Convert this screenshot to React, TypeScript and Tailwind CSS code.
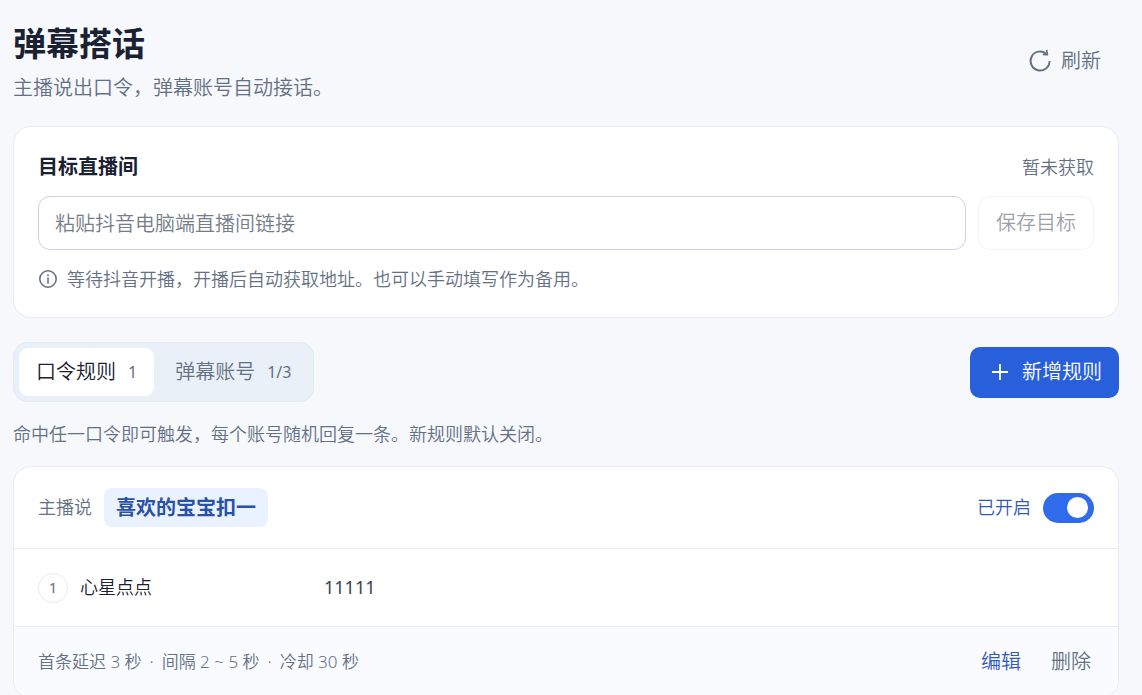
import { useState } from "react";

function RefreshIcon() {
  return (
    <svg className="size-6" viewBox="0 0 24 24" fill="none" stroke="currentColor" strokeWidth="1.9" strokeLinejoin="round" aria-hidden="true">
      <path d="M21.6 12A9.5 9.5 0 1 1 18.2 4.7" />
      <path d="M18.6 0.9L19.4 5.6L14.8 5.4" strokeWidth="1.7" />
    </svg>
  );
}

function InfoIcon() {
  return (
    <svg className="size-5 shrink-0" viewBox="0 0 20 20" fill="none" stroke="currentColor" strokeWidth="1.6" strokeLinecap="round" aria-hidden="true">
      <circle cx="10" cy="10" r="8.2" />
      <path d="M10 9.2v4.8" />
      <path d="M10 6.2v.2" strokeWidth="1.8" />
    </svg>
  );
}

function PlusIcon() {
  return (
    <svg className="size-5" viewBox="0 0 20 20" fill="none" stroke="currentColor" strokeWidth="1.8" aria-hidden="true">
      <path d="M10 2v16M2 10h16" />
    </svg>
  );
}

function Header() {
  return (
    <header className="flex items-center justify-between">
      <div>
        <h1 className="text-[33px] leading-12 font-bold text-[#1a2133]">弹幕搭话</h1>
        <p className="mt-1 text-[20px] leading-8 text-[#647084]">主播说出口令，弹幕账号自动接话。</p>
      </div>
      <button type="button" className="mr-[18px] flex items-center gap-[9px] pb-[2px] text-[20px] leading-8 text-[#647084]">
        <RefreshIcon />
        刷新
      </button>
    </header>
  );
}

function TargetCard() {
  const [url, setUrl] = useState("");
  return (
    <section className="mt-[22px] rounded-[18px] border border-[#e6eaf2] bg-white px-6 pt-6 pb-6">
      <div className="flex items-center justify-between leading-8">
        <label htmlFor="room-url" className="text-[20px] font-bold text-[#1a2133]">目标直播间</label>
        <span className="text-[18px] text-[#647084]">暂未获取</span>
      </div>
      <div className="mt-[13px] flex gap-3">
        <input
          id="room-url"
          value={url}
          onChange={(event) => setUrl(event.target.value)}
          placeholder="粘贴抖音电脑端直播间链接"
          className="h-[54px] min-w-0 flex-1 rounded-xl border border-[#cbd3e0] bg-white px-4 text-[20px] text-[#1a2133] outline-none placeholder:text-[#757d88]"
        />
        <button type="button" disabled={!url} className="h-[54px] rounded-xl border border-[#e6eaf2] bg-white px-[17px] text-[20px] text-[#3b4252] disabled:opacity-50">
          保存目标
        </button>
      </div>
      <p className="mt-[15px] flex items-center gap-[9px] text-[18px] leading-7 text-[#647084]">
        <InfoIcon />
        等待抖音开播，开播后自动获取地址。也可以手动填写作为备用。
      </p>
    </section>
  );
}

function Toolbar() {
  return (
    <div className="mt-6 flex items-center justify-between">
      <div role="tablist" className="flex rounded-[14px] border border-[#e2eaf4] bg-[#e9f0f8] p-[5px]">
        <button type="button" role="tab" aria-selected="true" className="flex h-12 items-center gap-3 rounded-[9px] bg-white px-[17px] text-[20px] text-[#1a2133]">
          口令规则
          <span className="text-[16px] font-normal text-[#647084]">1</span>
        </button>
        <button type="button" role="tab" aria-selected="false" className="flex h-12 items-center gap-3 rounded-[9px] pr-[17px] pl-[21px] text-[20px] text-[#647084]">
          弹幕账号
          <span className="text-[16px] font-normal">1/3</span>
        </button>
      </div>
      <button type="button" className="flex h-[51px] items-center gap-3 rounded-[10px] bg-[#2860db] pr-[17px] pl-[20px] text-[20px] text-white">
        <PlusIcon />
        新增规则
      </button>
    </div>
  );
}

function RuleCard() {
  const [enabled, setEnabled] = useState(true);
  return (
    <article className="mt-[18px] overflow-hidden rounded-[18px] border border-[#e6eaf2] bg-white">
      <div className="flex h-[81px] items-center justify-between px-6">
        <div className="flex items-center gap-3">
          <span className="text-[18px] text-[#647084]">主播说</span>
          <strong className="rounded-lg bg-[#ebf2ff] px-3 text-[20px] leading-[39px] font-bold text-[#2851a8]">喜欢的宝宝扣一</strong>
        </div>
        <label className="flex items-center gap-3 text-[18px] text-[#3459bd]">
          已开启
          <input
            type="checkbox"
            role="switch"
            checked={enabled}
            onChange={(event) => setEnabled(event.target.checked)}
            className="flex h-[30px] w-[51px] appearance-none items-center rounded-full bg-[#c5cedb] px-[6px] before:size-[21px] before:rounded-full before:bg-white checked:justify-end checked:bg-[#2f6bea]"
          />
        </label>
      </div>
      <div className="flex h-[78px] items-center border-t border-[#e9ecf2] px-6">
        <div className="flex w-[286px] items-center gap-3">
          <span className="flex size-[30px] items-center justify-center rounded-full border border-[#e6eaf2] text-[15px] font-normal text-[#647084]">1</span>
          <span className="text-[18px] text-[#1a2133]">心星点点</span>
        </div>
        <span className="text-[18px] font-normal text-[#3b4252]">11111</span>
      </div>
      <footer className="flex h-[71px] items-center justify-between border-t border-[#e9ecf2] bg-[#f9fbfe] px-6">
        <p className="flex gap-2 text-[17px] text-[#647084]">
          <span>首条延迟 3 秒</span>
          <span>·</span>
          <span>间隔 2 ~ 5 秒</span>
          <span>·</span>
          <span>冷却 30 秒</span>
        </p>
        <div className="flex gap-[30px] pr-[3px] text-[20px]">
          <button type="button" className="text-[#3459bd]">编辑</button>
          <button type="button" className="text-[#647084]">删除</button>
        </div>
      </footer>
    </article>
  );
}

export default function App() {
  return (
    <main className="min-h-screen bg-[#f6f8fc] pt-5 pr-[23px] pl-[13px] font-['Noto_Sans','Noto_Sans_CJK_SC',sans-serif] font-[350]" lang="zh-CN">
      <Header />
      <TargetCard />
      <Toolbar />
      <p className="mt-[18px] text-[18px] leading-7 text-[#647084]">命中任一口令即可触发，每个账号随机回复一条。新规则默认关闭。</p>
      <RuleCard />
    </main>
  );
}
